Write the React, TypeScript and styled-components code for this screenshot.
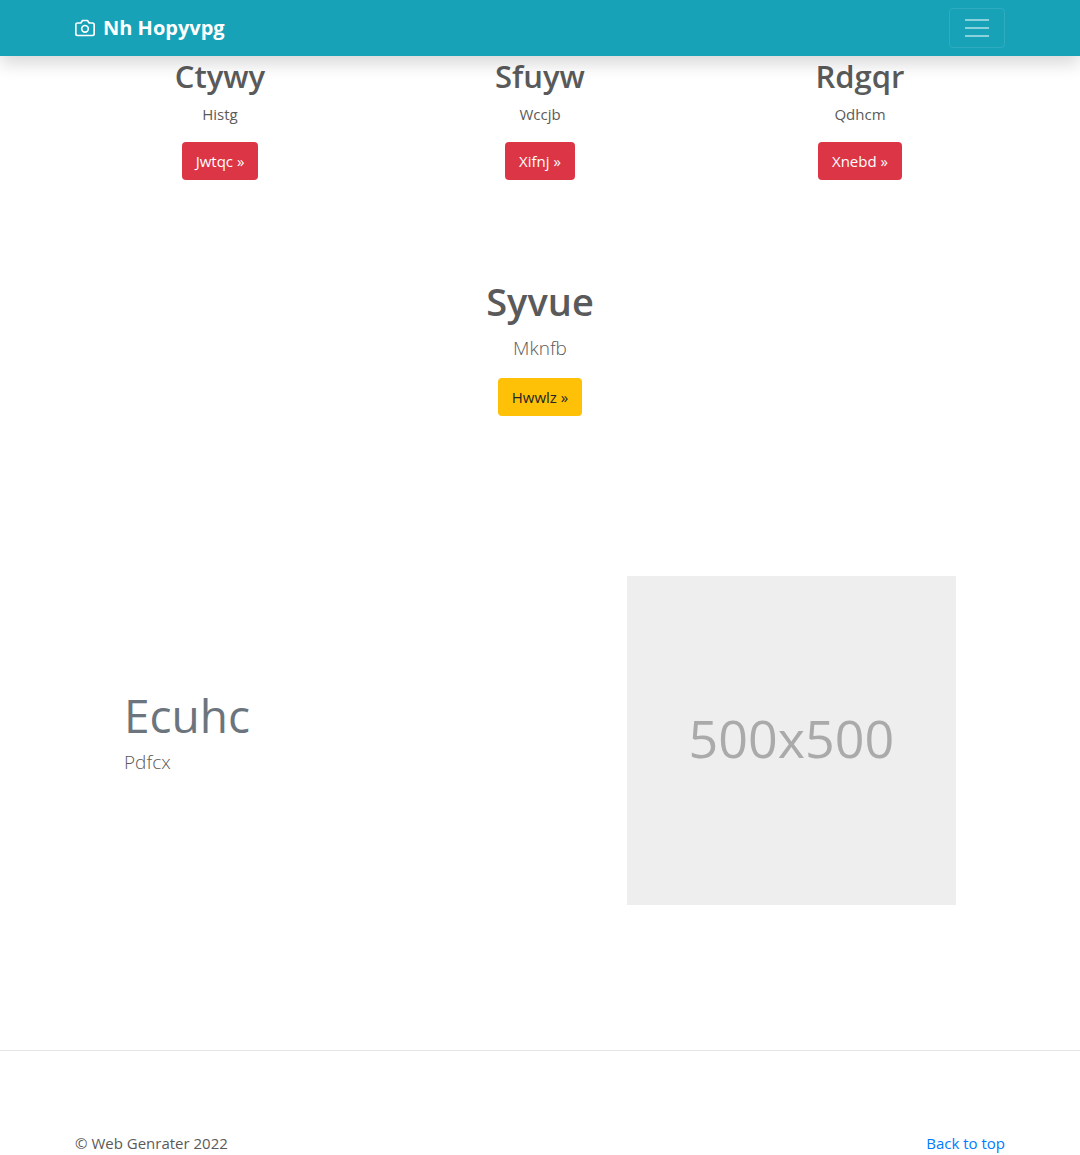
import React from "react";
import styled, { createGlobalStyle } from "styled-components";

const GlobalStyle = createGlobalStyle`
  *, *::before, *::after { box-sizing: border-box; }
  body {
    margin: 0;
    background: #fff;
    color: #5a5a5a;
    font-family: "Open Sans", "Noto Sans", sans-serif;
    font-size: 15px;
    line-height: 24px;
  }
  h1, h2, p { margin: 0; }
`;

const Container = styled.div`
  width: 100%;
  max-width: 960px;
  margin: 0 auto;
  padding: 0 15px;
`;

const Header = styled.header`
  position: sticky;
  top: 0;
  z-index: 10;
  padding: 8px 0;
  background: #17a2b8;
  box-shadow: 0 8px 16px rgba(0, 0, 0, 0.15);
`;

const NavRow = styled(Container)`
  display: flex;
  align-items: center;
  justify-content: space-between;
`;

const Brand = styled.a`
  display: flex;
  align-items: center;
  gap: 8px;
  color: #fff;
  font-size: 20px;
  font-weight: 700;
  line-height: 30px;
  text-decoration: none;
`;

const Toggler = styled.button`
  display: flex;
  align-items: center;
  justify-content: center;
  width: 56px;
  height: 40px;
  padding: 0;
  border: 1px solid rgba(255, 255, 255, 0.1);
  border-radius: 4px;
  background: transparent;
  color: rgba(255, 255, 255, 0.5);
`;

const Columns = styled.section`
  display: grid;
  grid-template-columns: repeat(3, 1fr);
  max-width: 960px;
  margin: 0 auto;
`;

const Block = styled.div`
  display: flex;
  flex-direction: column;
  align-items: center;
  text-align: center;
`;

const Promo = styled(Block).attrs({ as: "section" })`
  padding: 96px 15px 160px;
`;

const ColumnTitle = styled.h2`
  margin-bottom: 6px;
  font-size: 31px;
  font-weight: 600;
  line-height: 40px;
`;

const PromoTitle = styled.h1`
  margin-bottom: 6px;
  font-size: 38px;
  font-weight: 600;
  line-height: 50px;
`;

const Text = styled.p`
  margin-bottom: 16px;
`;

const Lead = styled.p`
  margin-bottom: 14px;
  font-size: 19px;
  font-weight: 300;
  line-height: 32px;
`;

const Button = styled.a<{ $tone: "danger" | "warning" }>`
  padding: 6px 13px;
  border: 1px solid transparent;
  border-radius: 4px;
  background: ${(p) => (p.$tone === "danger" ? "#dc3545" : "#ffc107")};
  color: ${(p) => (p.$tone === "danger" ? "#fff" : "#212529")};
  text-decoration: none;
`;

const Feature = styled.section`
  display: grid;
  grid-template-columns: 7fr 5fr;
  align-items: center;
  max-width: 862px;
  margin: 0 auto 145px;
`;

const FeatureCopy = styled.div`
  padding: 0 15px 4px;
`;

const FeatureTitle = styled.h2`
  margin-bottom: 2px;
  color: #6c757d;
  font-size: 46px;
  font-weight: 400;
  line-height: 58px;
`;

const Placeholder = styled.div`
  display: flex;
  align-items: center;
  justify-content: center;
  aspect-ratio: 1;
  margin: 0 15px;
  padding-bottom: 6px;
  background: #eee;
  color: #aaa;
  font-size: 52px;
`;

const Footer = styled.footer`
  padding-top: 80px;
  border-top: 1px solid #e5e5e5;
`;

const FooterRow = styled(Container)`
  display: flex;
  justify-content: space-between;
`;

const TopLink = styled.a`
  color: #007bff;
  text-decoration: none;
`;

const columns = [
  { title: "Ctywy", text: "Histg", action: "Jwtqc" },
  { title: "Sfuyw", text: "Wccjb", action: "Xifnj" },
  { title: "Rdgqr", text: "Qdhcm", action: "Xnebd" },
];

const CameraIcon = () => (
  <svg width="20" height="20" viewBox="0 0 24 24" fill="none" stroke="currentColor" strokeWidth="2" strokeLinecap="round" strokeLinejoin="round" aria-hidden="true">
    <path d="M23 19a2 2 0 0 1-2 2H3a2 2 0 0 1-2-2V8a2 2 0 0 1 2-2h4l2-3h6l2 3h4a2 2 0 0 1 2 2z" />
    <circle cx="12" cy="13" r="4" />
  </svg>
);

const MenuIcon = () => (
  <svg width="30" height="30" viewBox="0 0 30 30" stroke="currentColor" strokeWidth="2" aria-hidden="true">
    <path d="M3 7h24M3 15h24M3 23h24" />
  </svg>
);

export default function App() {
  return (
    <div id="top">
      <GlobalStyle />
      <Header>
        <NavRow>
          <Brand href="#top">
            <CameraIcon />
            Nh Hopyvpg
          </Brand>
          <Toggler type="button" aria-label="Toggle navigation">
            <MenuIcon />
          </Toggler>
        </NavRow>
      </Header>
      <main>
        <Columns>
          {columns.map((c) => (
            <Block key={c.title}>
              <ColumnTitle>{c.title}</ColumnTitle>
              <Text>{c.text}</Text>
              <Button href="#top" $tone="danger">{c.action} »</Button>
            </Block>
          ))}
        </Columns>
        <Promo>
          <PromoTitle>Syvue</PromoTitle>
          <Lead>Mknfb</Lead>
          <Button href="#top" $tone="warning">Hwwlz »</Button>
        </Promo>
        <Feature>
          <FeatureCopy>
            <FeatureTitle>Ecuhc</FeatureTitle>
            <Lead>Pdfcx</Lead>
          </FeatureCopy>
          <Placeholder role="img" aria-label="500x500">500x500</Placeholder>
        </Feature>
      </main>
      <Footer>
        <FooterRow>
          <span>© Web Genrater 2022</span>
          <TopLink href="#top">Back to top</TopLink>
        </FooterRow>
      </Footer>
    </div>
  );
}
